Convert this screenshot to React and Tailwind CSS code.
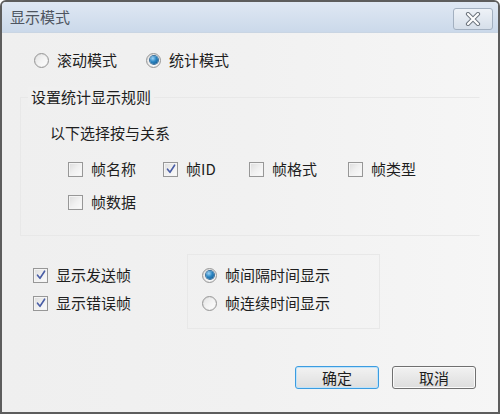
import React from "react";

const font = { fontFamily: '"Noto Sans CJK SC", "Noto Sans", sans-serif' };

function Radio({ checked, label }) {
  return (
    <label className="flex h-5 items-center gap-[8px]">
      <span className="flex h-[15px] w-[15px] items-center justify-center rounded-full border border-[#979797] bg-gradient-to-br from-[#e2e2e2] via-[#f3f3f3] to-[#ffffff] shadow-[inset_0_0_1px_#bbb]">
        {checked && (
          <span className="h-[8px] w-[8px] rounded-full bg-[radial-gradient(circle_at_35%_30%,#9fd3f5_0%,#2a85c2_45%,#0d4f86_100%)] shadow-[0_0_0_1px_#3b6f9a]" />
        )}
      </span>
      <span className="text-[15px] leading-5 text-[#1e1e1e]">{label}</span>
    </label>
  );
}

function Check({ checked, label, className = "" }) {
  return (
    <label className={"flex h-5 items-center gap-[8px] " + className}>
      <span className="flex h-[15px] w-[15px] items-center justify-center border border-[#979797] bg-gradient-to-br from-[#dcdcdc] via-[#f0f0f0] to-[#fbfbfb] shadow-[inset_0_0_0_1px_#f4f4f4]">
        {checked && (
          <svg width="10" height="10" viewBox="0 0 10 10">
            <path d="M1.5 5.2 L4 8.3 L8.6 1.2" fill="none" stroke="#4a5ea6" strokeWidth="1.6" strokeLinecap="round" strokeLinejoin="round" />
          </svg>
        )}
      </span>
      <span className="text-[15px] leading-5 text-[#1e1e1e]">{label}</span>
    </label>
  );
}

export default function App() {
  return (
    <div style={font} className="flex h-[414px] w-[500px] flex-col overflow-hidden rounded-t-[6px] border-2 border-[#5d5d5d] bg-[#f1f1f1]">
      {/* title bar */}
      <div className="flex h-[31px] shrink-0 items-center justify-between border-b border-[#c9d5e3] bg-gradient-to-b from-[#dfe8f3] to-[#cbd9ea] pl-[8px] pr-[5px]">
        <span className="text-[15px] leading-5 text-[#4e5560]">显示模式</span>
        <button className="mt-[3px] flex h-[22px] w-[40px] items-center justify-center rounded-[3px] border border-[#a3b0c0] bg-gradient-to-b from-[#eef2f7] to-[#d6dfea]">
          <svg width="18" height="14" viewBox="0 0 18 14">
            <path d="M4 2 L14 12 M14 2 L4 12" stroke="#6f7780" strokeWidth="4.2" strokeLinecap="round" />
            <path d="M4 2 L14 12 M14 2 L4 12" stroke="#ffffff" strokeWidth="2.2" strokeLinecap="round" />
          </svg>
        </button>
      </div>

      {/* body */}
      <div className="flex flex-1 flex-col bg-gradient-to-r from-[#efefef] via-[#f1f1f1] to-[#f6f6f6]">
        <div className="ml-[32px] mt-[17px] flex gap-[29px]">
          <Radio label="滚动模式" />
          <Radio checked label="统计模式" />
        </div>

        {/* group box */}
        <div className="ml-[18px] mt-[27px] flex w-[460px] flex-col border border-[#e8e8e8] border-r-transparent pb-[23px] pl-[29px]">
          <div className="-ml-[22px] -mt-[11px] self-start bg-[#f0f0f0] px-[3px] text-[15px] leading-5 text-[#1e1e1e]">设置统计显示规则</div>
          <div className="mt-[16px] text-[15px] leading-5 text-[#1e1e1e]">以下选择按与关系</div>
          <div className="ml-[18px] mt-[16px] flex">
            <Check label="帧名称" className="w-[95px]" />
            <Check checked label="帧ID" className="w-[86px]" />
            <Check label="帧格式" className="w-[99px]" />
            <Check label="帧类型" />
          </div>
          <div className="ml-[18px] mt-[13px] flex">
            <Check label="帧数据" />
          </div>
        </div>

        <div className="ml-[31px] mt-[18px] flex">
          <div className="flex w-[154px] flex-col gap-[8px] pt-[11px]">
            <Check checked label="显示发送帧" />
            <Check checked label="显示错误帧" />
          </div>
          <div className="flex h-[75px] w-[193px] flex-col gap-[8px] border border-[#e8e8e8] pl-[14px] pt-[10px]">
            <Radio checked label="帧间隔时间显示" />
            <Radio label="帧连续时间显示" />
          </div>
        </div>

        <div className="mr-[22px] mt-[37px] flex justify-end gap-[13px]">
          <button className="h-[23px] w-[84px] rounded-[3px] border border-[#3c9ce0] bg-gradient-to-b from-[#f2f2f2] to-[#dedede] text-[15px] leading-5 text-[#1e1e1e] shadow-[inset_0_0_0_1px_#bfe3fa]">
            确定
          </button>
          <button className="h-[23px] w-[84px] rounded-[3px] border border-[#707070] bg-gradient-to-b from-[#f2f2f2] to-[#dddddd] text-[15px] leading-5 text-[#1e1e1e] shadow-[inset_0_0_0_1px_#fafafa]">
            取消
          </button>
        </div>
      </div>
    </div>
  );
}
